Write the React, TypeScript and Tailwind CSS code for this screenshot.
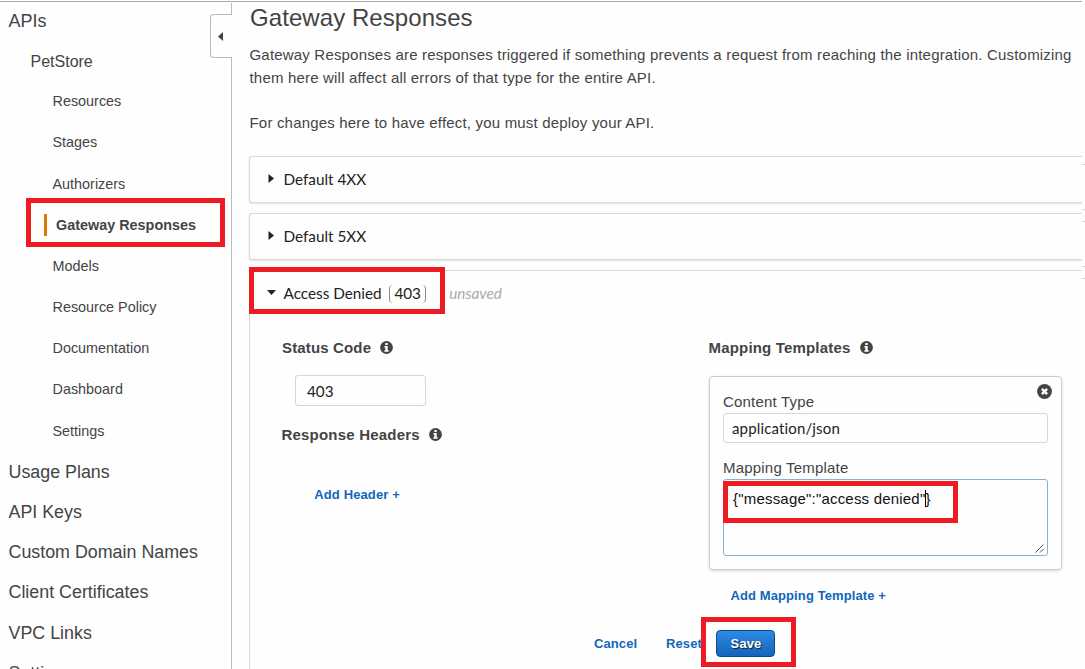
import React from 'react';

const subItems = [
  'Resources',
  'Stages',
  'Authorizers',
  'Gateway Responses',
  'Models',
  'Resource Policy',
  'Documentation',
  'Dashboard',
  'Settings',
];

const topItems = ['Usage Plans', 'API Keys', 'Custom Domain Names', 'Client Certificates', 'VPC Links', 'Settings'];

function InfoIcon() {
  return (
    <svg className="-mt-px h-[13px] w-[13px] shrink-0" viewBox="0 0 13 13">
      <circle cx="6.5" cy="6.5" r="6.4" fill="#444" />
      <path d="M5.3 2h2.4v2H5.3zM4.4 5h3.3v4.2h.9v1.5H4.4V9.2h.9V6.5h-.9z" fill="#fff" />
    </svg>
  );
}

function CloseIcon() {
  return (
    <svg className="h-[15px] w-[15px]" viewBox="0 0 15 15">
      <circle cx="7.5" cy="7.5" r="7.4" fill="#444" />
      <path d="M4.9 4.9l5.2 5.2M10.1 4.9l-5.2 5.2" stroke="#fff" strokeWidth="2.5" />
    </svg>
  );
}

function Sidebar() {
  return (
    <aside className="relative h-full w-[232px] shrink-0 overflow-hidden text-[#444]">
      <div className="absolute top-[3px] right-0 h-[11px] w-px bg-[#bbb]" />
      <div className="absolute top-[57px] right-0 bottom-0 w-px bg-[#bbb]" />
      <button className="absolute top-[14px] right-0 flex h-[44px] w-[22px] items-center rounded-l-[4px] border border-r-0 border-[#bbb] pl-[7px]">
        <svg className="mt-px h-[9px] w-[5px]" viewBox="0 0 5 9">
          <path d="M5 0v9L0 4.5z" fill="#444" />
        </svg>
      </button>
      <nav>
        <div className="mt-px flex h-10 items-center pl-[8.5px] text-[18px]">APIs</div>
        <div className="flex h-[40.4px] items-center pt-[1.5px] pl-[30.5px] text-[16px]">PetStore</div>
        {subItems.map((label) =>
          label === 'Gateway Responses' ? (
            <div key={label} className="flex h-[41.2px] items-center pl-11 text-[14.4px] font-bold">
              <span className="-mt-px mr-[9px] h-[22px] w-[3px] bg-[#e07700]" />
              {label}
            </div>
          ) : (
            <div key={label} className="flex h-[41.2px] items-center pl-[52.5px] text-[14.4px]">
              {label}
            </div>
          ),
        )}
        <div>
          {topItems.map((label) => (
            <div key={label} className="flex h-[40.2px] items-center pl-[8.5px] text-[17.85px]">
              {label}
            </div>
          ))}
        </div>
      </nav>
    </aside>
  );
}

function ClosedPanel({ title }: { title: string }) {
  return (
    <div className="mb-[10px] flex h-[47px] items-center rounded-l-[3px] border border-r-0 border-[#d9d9d9] pl-[18px] shadow-[0_1px_2px_rgba(0,0,0,0.12)]">
      <svg className="mr-[9.5px] -mt-[2px] h-[9px] w-[6px]" viewBox="0 0 6 9">
        <path d="M.5 0v9L6 4.5z" fill="#222" />
      </svg>
      <span className="font-['Lato',sans-serif] text-[15.3px] text-[#222]">{title}</span>
    </div>
  );
}

function AccessDeniedPanel() {
  return (
    <div className="h-[420px] rounded-tl-[3px] border-t border-l border-[#d9d9d9]">
      <div className="flex h-[45px] items-center pl-[17px] font-['Lato',sans-serif] text-[15.3px] text-[#222]">
        <svg className="mr-[7.5px] -mt-[2px] h-[5px] w-[9px]" viewBox="0 0 9 5">
          <path d="M0 0h9L4.5 5z" fill="#222" />
        </svg>
        <span>Access Denied</span>
        <span className="ml-[7.5px] flex h-[18px] w-[37px] items-center justify-center rounded-[4px] border-x border-[#888]">403</span>
        <span className="ml-[23px] text-[#aaa] italic">unsaved</span>
      </div>
      <div className="flex">
        <div className="w-[427px] pl-8">
          <div className="mt-[21px] flex h-[22px] items-center gap-[9px] text-[15px] font-bold tracking-[0.15px]">
            Status Code <InfoIcon />
          </div>
          <div className="mt-4 ml-[13px] flex h-[31px] w-[131px] items-center rounded-[3px] border border-[#d6d6d6] pt-[2px] pl-[11px] font-['Lato',sans-serif] text-[15.3px] text-[#222]">
            403
          </div>
          <div className="mt-[18px] -ml-[0.5px] flex h-[22px] items-center gap-[9px] text-[15px] font-bold tracking-[0.2px]">
            Response Headers <InfoIcon />
          </div>
          <div className="mt-[38px] pl-[32.3px] text-[13px] leading-[22px] font-bold tracking-[0.12px] text-[#1166bb]">Add Header +</div>
        </div>
        <div className="pl-[31.5px]">
          <div className="mt-[21px] flex h-[22px] items-center gap-[9.5px] text-[15px] font-bold tracking-[0.18px]">
            Mapping Templates <InfoIcon />
          </div>
          <div className="relative mt-[17px] ml-[0.5px] h-[194px] w-[353px] rounded-[4px] border border-[#ccc] px-[13px] pt-[14px] text-[15px] tracking-[0.2px] shadow-[0_1px_3px_rgba(0,0,0,0.15)]">
            <div className="absolute top-[7px] right-[9px]">
              <CloseIcon />
            </div>
            <div className="leading-[22px]">Content Type</div>
            <div className="flex h-[30px] items-center rounded-[3px] border border-[#d6d6d6] pl-2 font-['Lato',sans-serif] text-[15px] tracking-[0.15px] text-[#222]">
              application/json
            </div>
            <div className="mt-[14px] leading-[22px]">Mapping Template</div>
            <div className="relative h-[77px] rounded-[3px] border border-[#7fb3da] pt-[8px] pl-[9px] leading-[22px] text-[#111]">
              {'{"message":"access denied"'}
              <span className="mr-[-1px] inline-block h-[17px] w-px bg-black align-[-3px]" />
              {'}'}
              <svg className="absolute right-[3px] bottom-[2px] h-[9px] w-[9px]" viewBox="0 0 9 9">
                <path d="M.5 8.5l8-8M5 8.5L8.5 5" stroke="#555" strokeWidth="1" />
              </svg>
            </div>
          </div>
        </div>
      </div>
      <div className="mt-[15px] pl-[480.5px] text-[13px] leading-[22px] font-bold tracking-[0.1px] text-[#1166bb]">Add Mapping Template +</div>
      <div className="mt-[23px] flex h-[27px] items-center pl-[344px] text-[13px] font-bold tracking-[0.1px] text-[#1166bb]">
        <span className="w-[72px]">Cancel</span>
        <span className="w-[50px]">Reset</span>
        <button className="flex h-[27px] w-[59px] items-center justify-center rounded-[4px] border border-[#0d4a8c] bg-linear-to-b from-[#2e8ae6] to-[#1465ba] pl-px font-bold text-white [text-shadow:1px_1px_1px_#123]">
          Save
        </button>
      </div>
    </div>
  );
}

function EdgeStrip() {
  return (
    <div className="h-full w-[3px] shrink-0 pt-[164px]">
      <div className="mb-[11px] h-[46px] border-y border-[#d9d9d9]" />
      <div className="mb-[11px] h-[46px] border-y border-[#d9d9d9]" />
      <div className="h-px bg-[#d9d9d9]" />
    </div>
  );
}

export default function App() {
  return (
    <div className="relative flex h-[669px] w-[1085px] overflow-hidden bg-[#fefefe] font-['Liberation_Sans',Arial,sans-serif] text-[#444]">
      <div className="absolute top-px left-0 h-px w-[1082px] bg-[#aaa]" />
      <Sidebar />
      <main className="h-full w-[850px] shrink-0 overflow-hidden pl-[17px]">
        <h1 className="mt-[3px] ml-px text-[24px] leading-[30px] tracking-[0.07px] whitespace-nowrap">Gateway Responses</h1>
        <div className="mt-[11px] ml-[0.5px] text-[15px] leading-[22.5px] tracking-[0.187px] whitespace-nowrap">
          Gateway Responses are responses triggered if something prevents a request from reaching the integration. Customizing
          <br />
          them here will affect all errors of that type for the entire API.
          <br />
          <br />
          For changes here to have effect, you must deploy your API.
        </div>
        <div className="mt-[22px]">
          <ClosedPanel title="Default 4XX" />
          <ClosedPanel title="Default 5XX" />
          <AccessDeniedPanel />
        </div>
      </main>
      <EdgeStrip />
      <div className="absolute top-[198px] left-[26px] h-[49px] w-[199px] border-5 border-[#ed1c24]" />
      <div className="absolute top-[267px] left-[249px] h-[47px] w-[196px] border-5 border-[#ed1c24]" />
      <div className="absolute top-[481px] left-[723px] h-[42px] w-[235px] border-5 border-[#ed1c24]" />
      <div className="absolute top-[617px] left-[701px] h-[50px] w-[95px] border-5 border-[#ed1c24]" />
    </div>
  );
}
